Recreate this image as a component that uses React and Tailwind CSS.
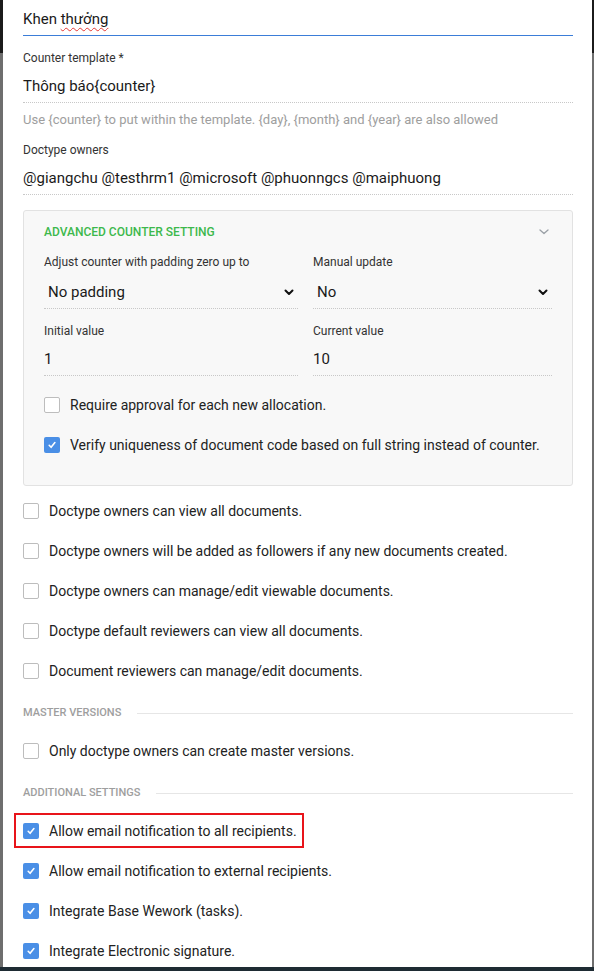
import React from "react";

const font = { fontFamily: "Roboto, 'Noto Sans', sans-serif" };

function Check({ checked }) {
  if (checked) {
    return (
      <span className="flex h-[16px] w-[16px] shrink-0 items-center justify-center rounded-[2px] bg-[#4a8fe6]">
        <svg width="10" height="10" viewBox="0 0 10 10" fill="none">
          <path d="M2.2 5.3 L4.1 7.3 L7.9 2.6" stroke="#fff" strokeWidth="1.6" strokeLinecap="round" strokeLinejoin="round" />
        </svg>
      </span>
    );
  }
  return <span className="block h-[16px] w-[16px] shrink-0 rounded-[2px] border border-[#bdbdbd] bg-white" />;
}

function Row({ checked, children, className = "" }) {
  return (
    <div className={"flex h-[20px] items-center gap-[10px] text-[14px] leading-[20px] text-[#222] " + className}>
      <Check checked={checked} />
      <span>{children}</span>
    </div>
  );
}

function Chevron() {
  return (
    <svg width="10" height="7" viewBox="0 0 10 7" fill="none">
      <path d="M1.5 1.5 L5 5 L8.5 1.5" stroke="#111" strokeWidth="2" strokeLinecap="round" strokeLinejoin="round" />
    </svg>
  );
}

function Section({ title, className = "" }) {
  return (
    <div className={"flex h-[16px] items-center gap-[16px] " + className}>
      <span className="text-[11px] font-medium uppercase leading-[16px] text-[#9e9e9e]">{title}</span>
      <div className="h-px flex-1 bg-[#e6e6e6]" />
    </div>
  );
}

export default function App() {
  return (
    <div className="flex h-[971px] w-[594px] flex-col overflow-hidden bg-white" style={font}>
      <div className="flex min-h-0 flex-1">
        <div className="flex w-[3px] flex-col">
          <div className="h-[53px] bg-[#1b1b1b]" />
          <div className="flex-1 bg-[#6e6e6e]" />
        </div>
        <div className="flex-1 bg-white pl-[20px] pr-[19px]">
          <div className="h-[35px] pt-[9px] text-[15px] leading-[20px] text-[#1a1a1a]">
            Khen <span className="underline decoration-[#e53935] decoration-wavy decoration-1 underline-offset-[3px]">thưởng</span>
          </div>
          <div className="h-px bg-[#3b7dd8]" />

          <div className="mt-[14px] text-[12px] leading-[16px] text-[#333]">Counter template *</div>
          <div className="mt-[10px] border-b border-dotted border-[#c8c8c8] pb-[6px] text-[15px] leading-[20px] text-[#1a1a1a]">
            Thông báo{"{counter}"}
          </div>
          <div className="mt-[9px] text-[13px] leading-[16px] text-[#9e9e9e]">
            Use {"{counter}"} to put within the template. {"{day}"}, {"{month}"} and {"{year}"} are also allowed
          </div>

          <div className="mt-[14px] text-[12px] leading-[16px] text-[#333]">Doctype owners</div>
          <div className="mt-[10px] border-b border-dotted border-[#c8c8c8] pb-[6px] text-[15px] leading-[20px] text-[#1a1a1a]">
            @giangchu @testhrm1 @microsoft @phuonngcs @maiphuong
          </div>

          <div className="mt-[15px] rounded-[3px] border border-[#e2e2e2] bg-[#f8f8f8] pb-[30px] pl-[20px] pr-[20px] pt-[13px]">
            <div className="flex h-[16px] items-center justify-between">
              <span className="text-[12px] font-medium uppercase leading-[16px] text-[#3db84c]">Advanced counter setting</span>
              <svg width="10" height="6" viewBox="0 0 10 6" fill="none" className="mr-[3px]">
                <path d="M1 1 L5 4.6 L9 1" stroke="#9aa0a6" strokeWidth="1.3" strokeLinecap="round" strokeLinejoin="round" />
              </svg>
            </div>

            <div className="mt-[14px] grid grid-cols-[254px_239px] gap-x-[15px]">
              <div>
                <div className="text-[12px] leading-[16px] text-[#333]">Adjust counter with padding zero up to</div>
                <div className="mt-[12px] flex items-center justify-between border-b border-dotted border-[#c8c8c8] pb-[6px] pl-[4px] pr-[4px] text-[15px] leading-[20px] text-[#1a1a1a]">
                  <span>No padding</span>
                  <Chevron />
                </div>
              </div>
              <div>
                <div className="text-[12px] leading-[16px] text-[#333]">Manual update</div>
                <div className="mt-[12px] flex items-center justify-between border-b border-dotted border-[#c8c8c8] pb-[6px] pl-[4px] pr-[4px] text-[15px] leading-[20px] text-[#1a1a1a]">
                  <span>No</span>
                  <Chevron />
                </div>
              </div>
              <div className="mt-[14px]">
                <div className="text-[12px] leading-[16px] text-[#333]">Initial value</div>
                <div className="mt-[10px] border-b border-dotted border-[#c8c8c8] pb-[6px] text-[15px] leading-[20px] text-[#1a1a1a]">1</div>
              </div>
              <div className="mt-[14px]">
                <div className="text-[12px] leading-[16px] text-[#333]">Current value</div>
                <div className="mt-[10px] border-b border-dotted border-[#c8c8c8] pb-[6px] text-[15px] leading-[20px] text-[#1a1a1a]">10</div>
              </div>
            </div>

            <Row className="mt-[19px]">Require approval for each new allocation.</Row>
            <Row checked className="mt-[20px]">Verify uniqueness of document code based on full string instead of counter.</Row>
          </div>

          <div className="mt-[15px] flex flex-col gap-[20px]">
            <Row>Doctype owners can view all documents.</Row>
            <Row>Doctype owners will be added as followers if any new documents created.</Row>
            <Row>Doctype owners can manage/edit viewable documents.</Row>
            <Row>Doctype default reviewers can view all documents.</Row>
            <Row>Document reviewers can manage/edit documents.</Row>
          </div>

          <Section title="Master versions" className="mt-[24px]" />
          <Row className="mt-[20px]">Only doctype owners can create master versions.</Row>

          <Section title="Additional settings" className="mt-[24px]" />
          <div className="mt-[20px] flex flex-col gap-[20px]">
            <div className="relative">
              <Row checked>Allow email notification to all recipients.</Row>
              <div className="pointer-events-none absolute -left-[9px] -top-[8px] h-[35px] w-[290px] border-2 border-[#e8141a]" />
            </div>
            <Row checked>Allow email notification to external recipients.</Row>
            <Row checked>Integrate Base Wework (tasks).</Row>
            <Row checked>Integrate Electronic signature.</Row>
          </div>
        </div>
        <div className="flex w-[2px] flex-col">
          <div className="h-[53px] bg-[#1b1b1b]" />
          <div className="flex-1 bg-[#6e6e6e]" />
        </div>
      </div>
      <div className="h-[4px] bg-[#1e2b33]" />
    </div>
  );
}
